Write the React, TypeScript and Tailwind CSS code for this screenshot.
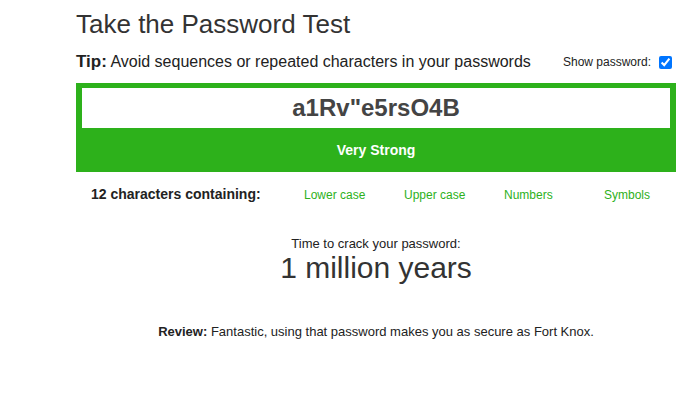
import React from 'react'

const criteria = ['Lower case', 'Upper case', 'Numbers', 'Symbols']

export default function App() {
  return (
    <div className="h-[410px] w-[694px] bg-white font-['Liberation_Sans',Arial,sans-serif] text-[#222]">
      <div className="ml-[76px] w-[600px]">
        {/* Heading */}
        <h1 className="pt-[8px] text-[26px] leading-[32px] text-[#333]">Take the Password Test</h1>

        {/* Tip + toggle */}
        <div className="mt-[10px] flex h-[24px] items-center justify-between">
          <p className="text-[16px]">
            <span className="text-[17px] font-bold">Tip:</span> Avoid sequences or repeated characters in your passwords
          </p>
          <label className="mr-[4px] flex items-center gap-[8px] text-[12px]">
            Show password:
            <input type="checkbox" defaultChecked className="m-0 h-[13px] w-[13px]" />
          </label>
        </div>

        {/* Strength box */}
        <div className="mt-[9px] bg-[#2db11b] px-[6px] pt-[5px]">
          <div className="flex h-[40px] items-center justify-center bg-white text-[24px] font-bold text-[#444]">
            a1Rv&quot;e5rsO4B
          </div>
          <div className="flex h-[44px] items-center justify-center text-[14px] font-bold text-white">Very Strong</div>
        </div>

        {/* Composition */}
        <div className="mt-[10px] grid h-[24px] grid-cols-[228px_100px_100px_100px_100px] items-center">
          <span className="pl-[15px] text-[14px] font-bold">12 characters containing:</span>
          {criteria.map((c) => (
            <span key={c} className="pt-[2px] text-[12px] text-[#2db11b]">
              {c}
            </span>
          ))}
        </div>

        {/* Crack time */}
        <div className="mt-[30px] text-center">
          <p className="text-[13px] leading-[16px]">Time to crack your password:</p>
          <p className="text-[30px] leading-[32px] text-[#333]">1 million years</p>
        </div>

        <p className="mt-[38px] text-center text-[13px]">
          <span className="font-bold">Review:</span> Fantastic, using that password makes you as secure as Fort Knox.
        </p>
      </div>
    </div>
  )
}
